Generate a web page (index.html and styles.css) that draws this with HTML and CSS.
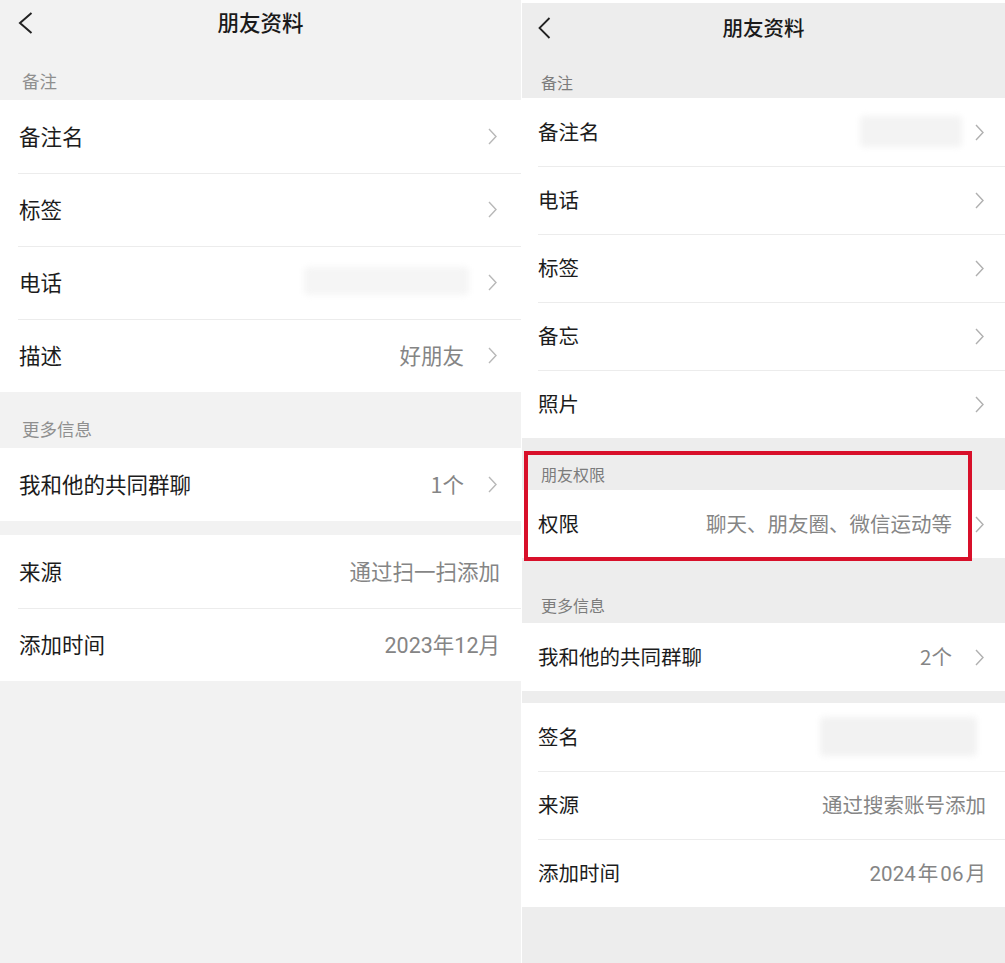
FILE: index.html
```html
<!DOCTYPE html>
<html lang="zh-CN">
<head>
<meta charset="utf-8">
<link rel="stylesheet" href="styles.css">
</head>
<body>
<div class="page">
  <!-- Left screenshot -->
  <div class="panel panel-left">
    <div class="nav">
      <svg class="back" viewBox="0 0 15 22" width="15" height="22"><path d="M13.5 1 L2 11 L13.5 21" fill="none" stroke="#222" stroke-width="2"/></svg>
      <div class="title">朋友资料</div>
    </div>
    <div class="sec sec-first">备注</div>
    <div class="card">
      <div class="row"><span class="label">备注名</span><span class="right"><svg class="chev" viewBox="0 0 9 17" width="9" height="17"><path d="M1 1 L8 8.5 L1 16" fill="none" stroke="#b8b8b8" stroke-width="1.4"/></svg></span></div>
      <div class="row"><span class="label">标签</span><span class="right"><svg class="chev" viewBox="0 0 9 17" width="9" height="17"><path d="M1 1 L8 8.5 L1 16" fill="none" stroke="#b8b8b8" stroke-width="1.4"/></svg></span></div>
      <div class="row"><span class="label">电话</span><span class="right"><span class="blur blur-phone"></span><svg class="chev" viewBox="0 0 9 17" width="9" height="17"><path d="M1 1 L8 8.5 L1 16" fill="none" stroke="#b8b8b8" stroke-width="1.4"/></svg></span></div>
      <div class="row"><span class="label">描述</span><span class="right"><span class="value">好朋友</span><svg class="chev" viewBox="0 0 9 17" width="9" height="17"><path d="M1 1 L8 8.5 L1 16" fill="none" stroke="#b8b8b8" stroke-width="1.4"/></svg></span></div>
    </div>
    <div class="sec sec-more">更多信息</div>
    <div class="card">
      <div class="row"><span class="label">我和他的共同群聊</span><span class="right"><span class="value">1个</span><svg class="chev" viewBox="0 0 9 17" width="9" height="17"><path d="M1 1 L8 8.5 L1 16" fill="none" stroke="#b8b8b8" stroke-width="1.4"/></svg></span></div>
    </div>
    <div class="gap"></div>
    <div class="card">
      <div class="row plain"><span class="label">来源</span><span class="value">通过扫一扫添加</span></div>
      <div class="row plain"><span class="label">添加时间</span><span class="value num">2023年12月</span></div>
    </div>
  </div>

  <!-- Right screenshot -->
  <div class="panel panel-right">
    <div class="nav">
      <svg class="back" viewBox="0 0 13 22" width="13" height="22"><path d="M11.5 1 L1.5 11 L11.5 21" fill="none" stroke="#222" stroke-width="1.8"/></svg>
      <div class="title">朋友资料</div>
    </div>
    <div class="sec sec-first">备注</div>
    <div class="card">
      <div class="row"><span class="label">备注名</span><span class="right"><span class="blur blur-name"></span><svg class="chev" viewBox="0 0 9 17" width="9" height="17"><path d="M1 1 L8 8.5 L1 16" fill="none" stroke="#b0b0b0" stroke-width="1.4"/></svg></span></div>
      <div class="row"><span class="label">电话</span><span class="right"><svg class="chev" viewBox="0 0 9 17" width="9" height="17"><path d="M1 1 L8 8.5 L1 16" fill="none" stroke="#b0b0b0" stroke-width="1.4"/></svg></span></div>
      <div class="row"><span class="label">标签</span><span class="right"><svg class="chev" viewBox="0 0 9 17" width="9" height="17"><path d="M1 1 L8 8.5 L1 16" fill="none" stroke="#b0b0b0" stroke-width="1.4"/></svg></span></div>
      <div class="row"><span class="label">备忘</span><span class="right"><svg class="chev" viewBox="0 0 9 17" width="9" height="17"><path d="M1 1 L8 8.5 L1 16" fill="none" stroke="#b0b0b0" stroke-width="1.4"/></svg></span></div>
      <div class="row"><span class="label">照片</span><span class="right"><svg class="chev" viewBox="0 0 9 17" width="9" height="17"><path d="M1 1 L8 8.5 L1 16" fill="none" stroke="#b0b0b0" stroke-width="1.4"/></svg></span></div>
    </div>
    <div class="perm">
      <div class="sec sec-perm">朋友权限</div>
      <div class="card">
        <div class="row"><span class="label">权限</span><span class="right"><span class="value">聊天、朋友圈、微信运动等</span><svg class="chev" viewBox="0 0 9 17" width="9" height="17"><path d="M1 1 L8 8.5 L1 16" fill="none" stroke="#b0b0b0" stroke-width="1.4"/></svg></span></div>
      </div>
      <div class="highlight"></div>
    </div>
    <div class="sec sec-more">更多信息</div>
    <div class="card">
      <div class="row"><span class="label">我和他的共同群聊</span><span class="right"><span class="value">2个</span><svg class="chev" viewBox="0 0 9 17" width="9" height="17"><path d="M1 1 L8 8.5 L1 16" fill="none" stroke="#b0b0b0" stroke-width="1.4"/></svg></span></div>
    </div>
    <div class="gap"></div>
    <div class="card">
      <div class="row plain"><span class="label">签名</span><span class="blur blur-sign"></span></div>
      <div class="row plain"><span class="label">来源</span><span class="value">通过搜索账号添加</span></div>
      <div class="row plain"><span class="label">添加时间</span><span class="value num">2024&#8202;年&#8202;06&#8202;月</span></div>
    </div>
  </div>
</div>
</body>
</html>
```
FILE: styles.css
```css
* { box-sizing: border-box; }
html, body { margin: 0; padding: 0; background: #ffffff; }
body {
  font-family: "Noto Sans CJK SC", "Noto Sans", sans-serif;
  color: #1c1c1c;
}
.page {
  display: flex;
  width: 1005px;
  height: 963px;
  overflow: hidden;
  gap: 1px;
}
.panel {
  display: flex;
  flex-direction: column;
}
.panel-left {
  width: 521px;
  background: #f2f2f2;
}
.panel-right {
  flex: 1;
  background: #ededed;
  margin-top: 3px;
}

/* nav bar */
.nav {
  position: relative;
  display: flex;
  align-items: center;
  justify-content: center;
}
.panel-left .nav { height: 46px; padding-bottom: 2px; }
.panel-right .nav { height: 50px; padding-bottom: 2px; }
.back {
  position: absolute;
  top: 50%;
  transform: translateY(-50%);
}
.panel-left .back { left: 18px; }
.panel-right .back { left: 16px; }
.title {
  font-weight: 500;
  color: #1a1a1a;
}
.panel-left .title { font-size: 21.5px; line-height: 26px; }
.panel-right .title { font-size: 20.5px; line-height: 26px; }

/* section labels */
.sec { color: #8f8f8f; }
.panel-left .sec {
  font-size: 17.5px;
  line-height: 24px;
  padding: 0 22px 7px;
}
.panel-left .sec-first { padding-top: 23px; }
.panel-left .sec-more { padding-top: 25px; }
.panel-right .sec {
  font-size: 16px;
  line-height: 22px;
  padding: 0 19px 5px;
  color: #7c7c7c;
}
.panel-right .sec-first { padding-top: 18px; }
.panel-right .sec-perm { padding-top: 25px; }
.panel-right .sec-more { padding-top: 36px; padding-bottom: 7px; }

/* cards & rows */
.card { background: #ffffff; }
.row {
  display: flex;
  align-items: center;
  justify-content: space-between;
  position: relative;
}
.row + .row::before {
  content: "";
  position: absolute;
  top: 0;
  right: 0;
  height: 1px;
  background: #ececec;
}
.panel-left .row {
  height: 73px;
  padding: 0 24px 3px 19px;
  font-size: 21.5px;
}
.panel-left .row + .row::before { left: 18px; }
.panel-left .row.plain { padding-right: 21px; }
.panel-right .row {
  height: 68px;
  padding: 0 21px 2px 16px;
  font-size: 20.5px;
}
.panel-right .row + .row::before { left: 16px; }
.panel-right .row.plain { padding-right: 19px; }

.label { color: #1c1c1c; white-space: nowrap; }
.right {
  display: flex;
  align-items: center;
}
.value { color: #858585; white-space: nowrap; }
.value.num { font-family: "Roboto", "Noto Sans CJK SC", sans-serif; }
.panel-left .right .value { margin-right: 24px; }
.panel-right .right .value { margin-right: 23px; }
.chev { display: block; margin-top: 3px; }

/* blurred placeholders */
.blur {
  display: block;
  background: #f3f3f3;
  filter: blur(3px);
  border-radius: 4px;
}
.blur-phone { width: 165px; height: 28px; margin-right: 19px; background: #f5f5f5; }
.blur-name { width: 102px; height: 31px; margin-right: 13px; }
.blur-sign { width: 157px; height: 39px; margin-right: 9px; background: #f2f2f2; }

.gap { flex: none; }
.panel-left .gap { height: 14px; }
.panel-right .gap { height: 12px; }

/* red highlight box */
.perm { position: relative; }
.highlight {
  position: absolute;
  left: 2px;
  top: 13px;
  width: 448px;
  height: 110px;
  border: 4px solid #d8102a;
  pointer-events: none;
}
```
